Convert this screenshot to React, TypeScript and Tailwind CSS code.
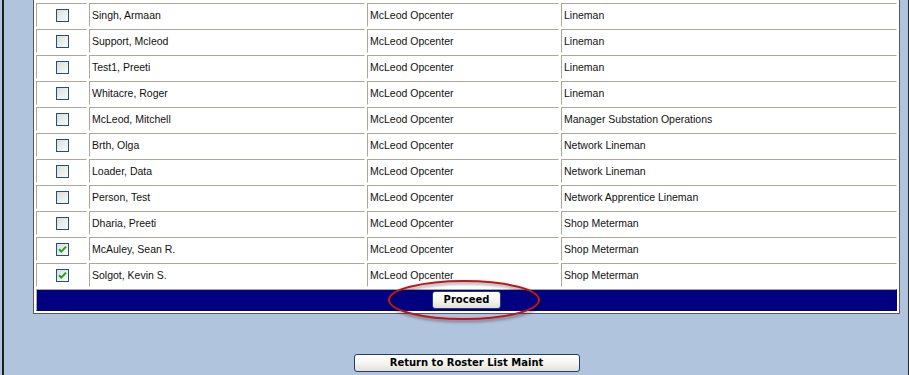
import React from "react";

type Member = {
  name: string;
  company: string;
  title: string;
  selected: boolean;
};

const members: Member[] = [
  { name: "Singh, Armaan", company: "McLeod Opcenter", title: "Lineman", selected: false },
  { name: "Support, Mcleod", company: "McLeod Opcenter", title: "Lineman", selected: false },
  { name: "Test1, Preeti", company: "McLeod Opcenter", title: "Lineman", selected: false },
  { name: "Whitacre, Roger", company: "McLeod Opcenter", title: "Lineman", selected: false },
  { name: "McLeod, Mitchell", company: "McLeod Opcenter", title: "Manager Substation Operations", selected: false },
  { name: "Brth, Olga", company: "McLeod Opcenter", title: "Network Lineman", selected: false },
  { name: "Loader, Data", company: "McLeod Opcenter", title: "Network Lineman", selected: false },
  { name: "Person, Test", company: "McLeod Opcenter", title: "Network Apprentice Lineman", selected: false },
  { name: "Dharia, Preeti", company: "McLeod Opcenter", title: "Shop Meterman", selected: false },
  { name: "McAuley, Sean R.", company: "McLeod Opcenter", title: "Shop Meterman", selected: true },
  { name: "Solgot, Kevin S.", company: "McLeod Opcenter", title: "Shop Meterman", selected: true },
];

// inset look of an old html table cell
const cell =
  "h-[24px] flex items-center px-[2px] border border-t-[#aca899] border-l-[#aca899] border-r-white border-b-white whitespace-nowrap overflow-hidden";

const btn =
  "h-[18px] rounded-[3px] border border-[#1c3f6e] bg-gradient-to-b from-white via-[#f6f5f0] to-[#e2e0d6] font-['DejaVu_Sans',Verdana,sans-serif] font-bold text-[10px] text-black leading-none";

const XpCheckbox: React.FC<{ checked: boolean }> = ({ checked }) => (
  <span className="w-[13px] h-[13px] ml-px border border-[#1c5180] bg-gradient-to-br from-[#dcdcd7] to-[#fbfbf9] flex items-center justify-center">
    {checked && (
      <svg width="9" height="9" viewBox="0 0 9 9">
        <path d="M1 4.2 L3.3 6.6 L8 1.6" fill="none" stroke="#21a121" strokeWidth="2" />
      </svg>
    )}
  </span>
);

export default function App() {
  return (
    <div className="w-[909px] h-[375px] bg-[#b0c4de] flex overflow-hidden font-['Liberation_Sans',Arial,sans-serif] text-[10.5px] text-[#111]">
      <div className="w-[2px]" />
      <div className="w-[2px] bg-[#1e1e1e]" />
      <div className="w-[29px]" />

      <div className="w-[867px] flex flex-col items-center">
        {/* roster panel */}
        <div className="w-[867px] bg-white border-x border-b border-[#595959]">
          <div className="grid grid-cols-[51px_276px_192px_336px] gap-[2px] px-[2px] pt-[3px] pb-[2px]">
            {members.map((m) => (
              <React.Fragment key={m.name}>
                <div className={`${cell} justify-center`}>
                  <XpCheckbox checked={m.selected} />
                </div>
                <div className={`${cell} pt-[2px]`}>{m.name}</div>
                <div className={`${cell} pt-[2px]`}>{m.company}</div>
                <div className={`${cell} pt-[2px]`}>{m.title}</div>
              </React.Fragment>
            ))}
            <div className="col-span-4 h-[22px] bg-[#000080] border border-t-[#aca899] border-l-[#aca899] border-r-[#000080] border-b-[#000080] flex items-center justify-center">
              <span className="relative flex">
                <button className={`${btn} w-[69px]`}>Proceed</button>
                <svg
                  className="absolute left-[-45px] top-[-12px] pointer-events-none drop-shadow-[1px_2px_1.5px_rgba(0,0,0,0.45)]"
                  width="156"
                  height="44"
                  viewBox="0 0 156 44"
                >
                  <ellipse cx="77" cy="21" rx="75" ry="19" fill="none" stroke="#c0151b" strokeWidth="2" />
                </svg>
              </span>
            </div>
          </div>
        </div>

        <button className={`${btn} w-[226px] mt-[40px]`}>Return to Roster List Maint</button>
      </div>

      <div className="w-[8px]" />
      <div className="w-[1px] bg-[#2a2a2a]" />
    </div>
  );
}
